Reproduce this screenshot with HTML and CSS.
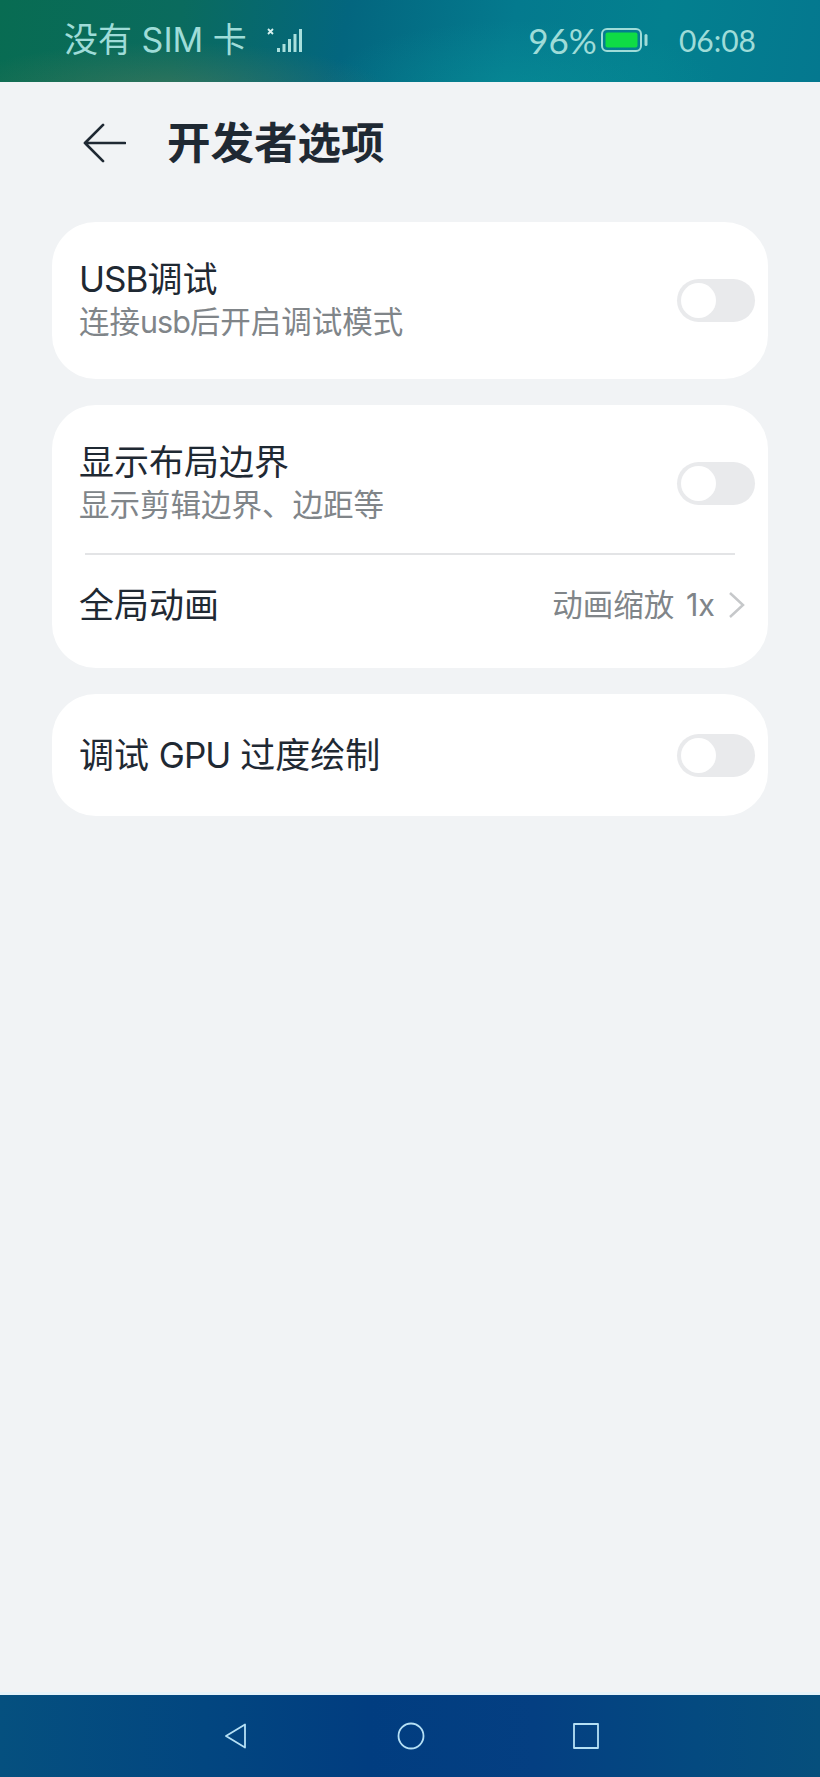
FILE: index.html
```html
<!DOCTYPE html>
<html lang="zh-CN">
<head>
<meta charset="utf-8">
<title>开发者选项</title>
<link rel="stylesheet" href="styles.css">
</head>
<body>
<div class="page">
  <div class="status">
    <div class="status-left">
      <span class="carrier">没有 SIM 卡</span>
      <svg class="signal" width="36" height="26" viewBox="0 0 36 26">
        <path class="sig-x" d="M1 2l5 5M6 2l-5 5"/>
        <path class="sig-bars" d="M11.500 21v4M17 17v8M22.500 12v13M28 7v18M33.500 2v23"/>
      </svg>
    </div>
    <div class="status-right">
      <span class="percent">96%</span>
      <svg class="battery" width="48" height="26" viewBox="0 0 48 26">
        <rect class="bat-shell" x="1" y="2" width="39" height="22" rx="5"/>
        <rect class="bat-fill" x="4.500" y="5.500" width="32" height="15" rx="2"/>
        <rect class="bat-nub" x="43.500" y="7" width="3" height="12" rx="1.500"/>
      </svg>
      <span class="clock">06:08</span>
    </div>
  </div>

  <header class="header">
    <svg class="back" width="46" height="42" viewBox="0 0 46 42">
      <path d="M22 2L3 21l19 19M3 21h42"/>
    </svg>
    <h1 class="title">开发者选项</h1>
  </header>

  <main class="content">
    <section class="card">
      <div class="row row-tall-1">
        <div class="text">
          <div class="label"><span class="latin">USB</span>调试</div>
          <div class="desc">连接<span class="latin">usb</span>后开启调试模式</div>
        </div>
        <span class="toggle"><span class="knob"></span></span>
      </div>
    </section>

    <section class="card">
      <div class="row row-tall-2">
        <div class="text">
          <div class="label">显示布局边界</div>
          <div class="desc">显示剪辑边界、边距等</div>
        </div>
        <span class="toggle"><span class="knob"></span></span>
      </div>
      <div class="divider"></div>
      <div class="row row-link">
        <div class="label">全局动画</div>
        <div class="value">
          <span>动画缩放 1x</span>
          <svg class="chev" width="18" height="28" viewBox="0 0 18 28">
            <path d="M2 2l13 12L2 26"/>
          </svg>
        </div>
      </div>
    </section>

    <section class="card">
      <div class="row row-single">
        <div class="label">调试 <span class="latin">GPU</span> 过度绘制</div>
        <span class="toggle"><span class="knob"></span></span>
      </div>
    </section>
  </main>

  <nav class="nav">
    <svg class="nav-icon" width="24" height="28" viewBox="0 0 24 28">
      <path d="M20 2.500v23L1 14z"/>
    </svg>
    <svg class="nav-icon" width="28" height="28" viewBox="0 0 28 28">
      <circle cx="14" cy="14" r="12.500"/>
    </svg>
    <svg class="nav-icon" width="26" height="26" viewBox="0 0 26 26">
      <rect x="1" y="1" width="24" height="24"/>
    </svg>
  </nav>
</div>
</body>
</html>
```

FILE: styles.css
```css
* { box-sizing: border-box; }

html, body {
  margin: 0;
  padding: 0;
}

body {
  background: #f1f3f5;
  font-family: Inter, "Noto Sans CJK SC", "Noto Sans", sans-serif;
  color: #1f2933;
}

.page {
  width: 820px;
  height: 1777px;
  display: flex;
  flex-direction: column;
  overflow: hidden;
}

.status {
  height: 82px;
  flex: none;
  display: flex;
  justify-content: space-between;
  align-items: center;
  padding: 0 64px 2px 64px;
  color: #9fdcd8;
  background:
    radial-gradient(ellipse 220px 50px at 170px 92px, rgba(110, 130, 90, 0.4), transparent),
    radial-gradient(ellipse 200px 70px at 520px 90px, rgba(10, 150, 155, 0.45), transparent),
    linear-gradient(100deg, #086c52 0%, #0a6b5e 22%, #03667f 42%, #047a8e 62%, #03808f 80%, #04788f 100%);
}

.status-left {
  display: flex;
  align-items: center;
  gap: 20px;
}

.carrier {
  font-size: 34px;
  line-height: 40px;
  white-space: nowrap;
}

.signal {
  display: block;
}

.sig-x {
  fill: none;
  stroke: #d6f0ee;
  stroke-width: 1.800;
}

.sig-bars {
  fill: none;
  stroke: #a9e0dd;
  stroke-width: 3;
}

.status-right {
  display: flex;
  align-items: center;
}

.percent {
  font-family: Lato, "Noto Sans", sans-serif;
  font-size: 35px;
  line-height: 40px;
  margin-right: 4px;
}

.battery {
  display: block;
  margin-right: 30px;
}

.bat-shell {
  fill: none;
  stroke: #9fdcd8;
  stroke-width: 2;
}

.bat-fill {
  fill: #0fdc45;
}

.bat-nub {
  fill: #9fdcd8;
}

.clock {
  font-family: Lato, "Noto Sans", sans-serif;
  font-size: 30px;
  line-height: 40px;
}

.header {
  height: 140px;
  flex: none;
  display: flex;
  align-items: center;
  padding: 0 0 18px 82px;
}

.back {
  display: block;
  flex: none;
  width: 44px;
  height: 40px;
}

.back path {
  fill: none;
  stroke: #1f2933;
  stroke-width: 2.800;
  stroke-linecap: round;
  stroke-linejoin: round;
}

.title {
  margin: 0 0 0 41px;
  font-size: 43.500px;
  line-height: 56px;
  font-weight: 700;
  color: #1f2933;
}

.content {
  flex: 1;
  padding: 0 52px;
  display: flex;
  flex-direction: column;
  gap: 26px;
}

.card {
  background: #fff;
  border-radius: 44px;
}

.row {
  display: flex;
  align-items: center;
  justify-content: space-between;
  padding: 0 13px 0 27px;
}

.row-tall-1 { height: 157px; }
.row-tall-1 .text { padding-bottom: 1px; }

.row-tall-2 {
  height: 148px;
  padding-top: 8px;
}

.row-single { height: 122px; }
.row-single .label { margin-bottom: 1px; }

.row-link {
  height: 113px;
  padding: 0 36px 13px 27px;
}

.text {
  display: flex;
  flex-direction: column;
}

.label {
  font-size: 35px;
  line-height: 44px;
  font-weight: 400;
  color: #1f2933;
  white-space: nowrap;
}

.latin {
  letter-spacing: -1px;
}

.desc {
  font-size: 30.500px;
  line-height: 42px;
  color: #808589;
  white-space: nowrap;
}

.toggle {
  display: block;
  flex: none;
  width: 78px;
  height: 43px;
  border-radius: 22px;
  background: #e9eaec;
  padding: 4px;
}

.knob {
  display: block;
  width: 35px;
  height: 35px;
  border-radius: 50%;
  background: #fff;
}

.divider {
  height: 2px;
  margin: 0 33px;
  background: #e3e4e6;
}

.value {
  display: flex;
  align-items: center;
  gap: 13px;
  font-size: 30.500px;
  line-height: 40px;
  word-spacing: 3px;
  color: #808589;
}

.chev {
  display: block;
  margin-right: -14px;
}

.chev path {
  fill: none;
  stroke: #c6c8ca;
  stroke-width: 2.500;
}

.nav {
  height: 82px;
  flex: none;
  display: flex;
  justify-content: center;
  align-items: center;
  gap: 148px;
  padding-left: 3px;
  box-shadow: 0 -3px 0 #e6f3fa;
  background: linear-gradient(90deg, #05507f 0%, #024680 25%, #013d80 45%, #043f82 65%, #044a80 85%, #064f7c 100%);
}

.nav-icon {
  display: block;
}

.nav-icon path,
.nav-icon circle,
.nav-icon rect {
  fill: none;
  stroke: #b5e0f5;
  stroke-width: 1.800;
  stroke-linejoin: round;
}
```
